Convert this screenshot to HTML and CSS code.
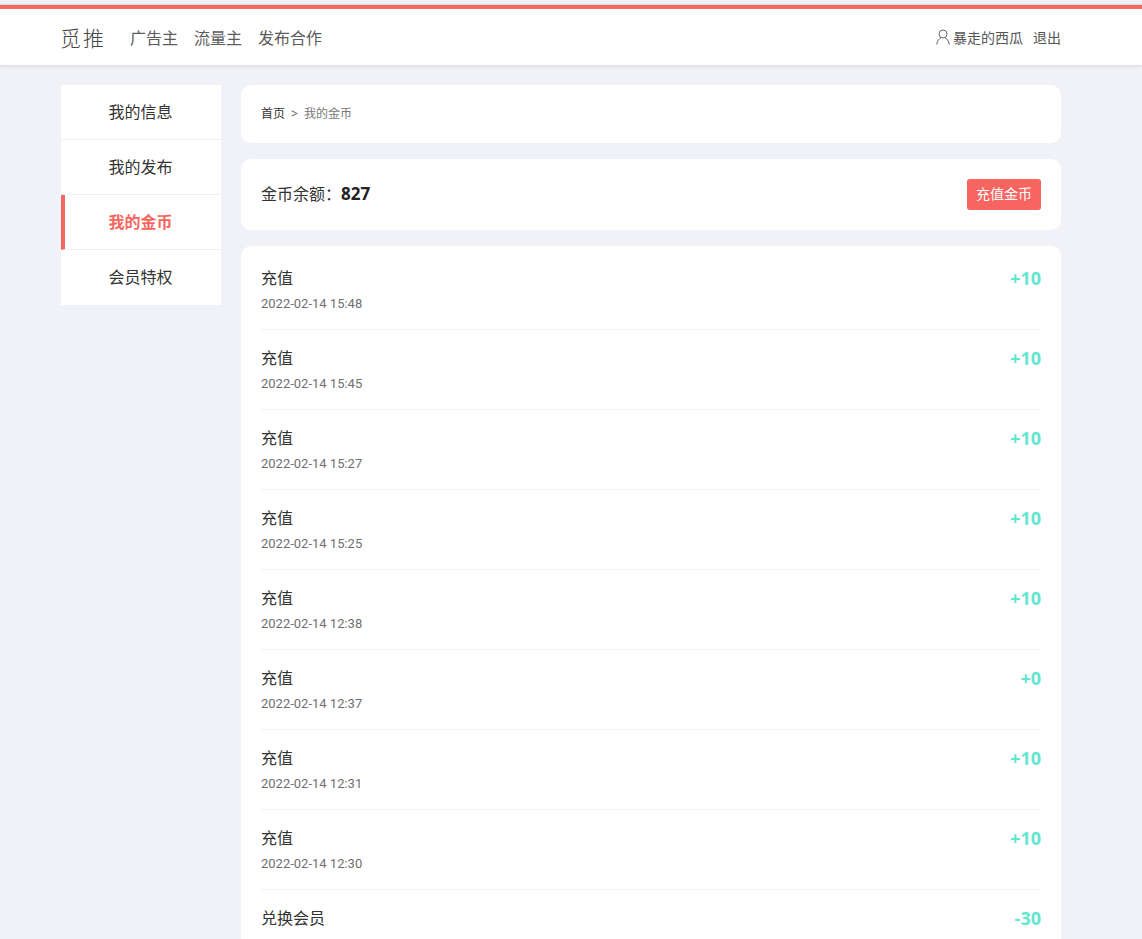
FILE: index.html
```html
<!DOCTYPE html>
<html lang="zh-CN">
<head>
<meta charset="utf-8">
<title>我的金币</title>
<link rel="stylesheet" href="styles.css">
</head>
<body>
<header class="header">
  <div class="header-inner">
    <div class="brand">觅推</div>
    <nav class="nav">
      <a>广告主</a>
      <a>流量主</a>
      <a>发布合作</a>
    </nav>
    <div class="user">
      <svg class="user-icon" viewBox="0 0 14 16" width="14" height="16" fill="none" stroke="#666" stroke-width="1">
        <circle cx="7" cy="5" r="4"/>
        <path d="M0.7 15.5c0.4-3.4 2.4-6 4.4-6.8M13.3 15.5c-0.4-3.4-2.4-6-4.4-6.8"/>
      </svg>
      <span class="user-name">暴走的西瓜</span>
      <a class="logout">退出</a>
    </div>
  </div>
</header>
<div class="page">
  <aside class="side">
    <a class="side-item">我的信息</a>
    <a class="side-item">我的发布</a>
    <a class="side-item active">我的金币</a>
    <a class="side-item">会员特权</a>
  </aside>
  <main class="main">
    <div class="card crumbs">
      <span class="crumb-home">首页</span>
      <span class="crumb-sep">&gt;</span>
      <span class="crumb-cur">我的金币</span>
    </div>
    <div class="card balance">
      <div class="balance-text">金币余额：<b class="balance-num">827</b></div>
      <a class="btn">充值金币</a>
    </div>
    <div class="card list">
      <div class="row"><div><div class="row-title">充值</div><div class="row-date">2022-02-14 15:48</div></div><div class="row-val">+10</div></div>
      <div class="row"><div><div class="row-title">充值</div><div class="row-date">2022-02-14 15:45</div></div><div class="row-val">+10</div></div>
      <div class="row"><div><div class="row-title">充值</div><div class="row-date">2022-02-14 15:27</div></div><div class="row-val">+10</div></div>
      <div class="row"><div><div class="row-title">充值</div><div class="row-date">2022-02-14 15:25</div></div><div class="row-val">+10</div></div>
      <div class="row"><div><div class="row-title">充值</div><div class="row-date">2022-02-14 12:38</div></div><div class="row-val">+10</div></div>
      <div class="row"><div><div class="row-title">充值</div><div class="row-date">2022-02-14 12:37</div></div><div class="row-val">+0</div></div>
      <div class="row"><div><div class="row-title">充值</div><div class="row-date">2022-02-14 12:31</div></div><div class="row-val">+10</div></div>
      <div class="row"><div><div class="row-title">充值</div><div class="row-date">2022-02-14 12:30</div></div><div class="row-val">+10</div></div>
      <div class="row"><div><div class="row-title">兑换会员</div></div><div class="row-val">-30</div></div>
    </div>
  </main>
</div>
</body>
</html>
```
FILE: styles.css
```css
* { box-sizing: border-box; }
html, body { margin: 0; padding: 0; }
html { overflow: hidden; height: 100%; }
body {
  height: 100%;
  overflow: hidden;
  background: #f1f2f7;
  padding-top: 5px;
  font-family: "Open Sans", "Noto Sans CJK SC", sans-serif;
  color: #333;
}
.header {
  height: 60px;
  background: #fff;
  border-top: 4px solid #f76560;
  box-shadow: 0 -1px 0 #d9d9d9, 0 1px 4px rgba(0,0,0,.12);
  position: relative;
}
.header-inner {
  width: 1000px;
  margin-left: 61px;
  height: 56px;
  display: flex;
  align-items: center;
}
.brand { font-size: 21px; letter-spacing: 2px; color: #444; width: 69px; margin-left: -1px; margin-right: 1px; font-weight: 300; }
.nav { display: flex; gap: 16px; font-size: 16px; color: #5c5c5c; }
.user { margin-left: auto; display: flex; align-items: center; font-size: 14px; color: #555; }
.user-icon { margin-right: 3px; }
.logout { margin-left: 10px; }
.page {
  width: 1000px;
  margin: 20px 0 0 61px;
  display: flex;
  gap: 20px;
  align-items: flex-start;
}
.side { width: 160px; background: #fff; flex: none; }
.side-item {
  display: block;
  height: 55px;
  line-height: 54px;
  text-align: center;
  font-size: 16px;
  color: #333;
  border-bottom: 1px solid #eeeff3;
  padding-right: 1px;
}
.side-item:last-child { border-bottom: 0; }
.side-item.active {
  color: #f76560;
  font-weight: 700;
  border-left: 4px solid #f76560;
  padding-right: 5px;
}
.main { flex: 1; min-width: 0; display: flex; flex-direction: column; gap: 16px; }
.card { background: #fff; border-radius: 10px; padding: 0 20px; }
.crumbs { height: 58px; display: flex; align-items: center; font-size: 12px; padding-bottom: 2px; }
.crumb-home { color: #333; }
.crumb-sep { margin: 0 6px; color: #555; }
.crumb-cur { color: #777; }
.balance { height: 71px; display: flex; align-items: center; justify-content: space-between; }
.balance-text { font-size: 16px; color: #333; margin-bottom: 3px; }
.balance-num { font-size: 17px; color: #222; }
.btn {
  width: 74px;
  height: 31px;
  line-height: 30px;
  text-align: center;
  background: #f76560;
  border-radius: 3px;
  color: #fff;
  font-size: 14px;
}
.row {
  height: 80px;
  display: flex;
  justify-content: space-between;
  border-bottom: 1px solid #f3f3f5;
  padding-top: 16px;
}
.list { padding-top: 4px; }
.row-title { font-size: 16px; line-height: 24px; color: #333; }
.row-date { font-family: Roboto, "Open Sans", sans-serif; font-size: 13px; line-height: 18px; color: #707070; margin-top: 5px; }
.row-val { font-size: 18px; line-height: 24px; font-weight: 700; color: #62e6cf; }
```
